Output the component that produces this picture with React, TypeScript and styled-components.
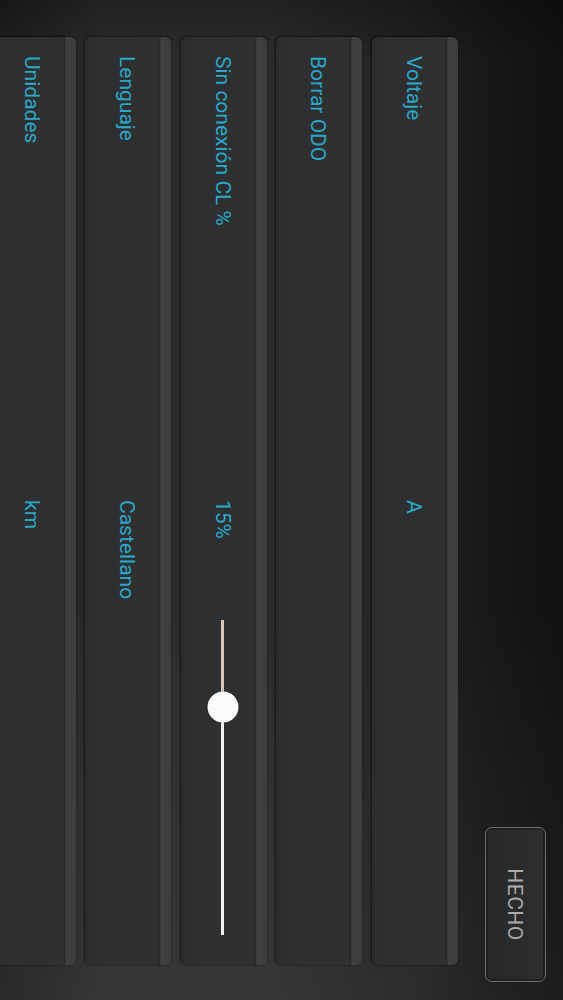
import React from "react";
import styled, { createGlobalStyle } from "styled-components";

const GlobalStyle = createGlobalStyle`
  html, body {
    margin: 0;
    padding: 0;
    background: #111213;
  }
  body {
    font-family: Roboto, "Noto Sans", "Liberation Sans", sans-serif;
  }
`;

const Viewport = styled.div`
  width: 563px;
  height: 1000px;
  overflow: hidden;
  position: relative;
`;

/* The reference is a landscape screen shown rotated a quarter turn clockwise */
const Screen = styled.div`
  width: 1000px;
  height: 563px;
  transform-origin: 0 0;
  transform: translateX(563px) rotate(90deg);
  display: flex;
  flex-direction: column;
  overflow: hidden;
  background:
    linear-gradient(to right, rgba(0, 0, 0, 0.25) 0%, rgba(0, 0, 0, 0) 6%, rgba(0, 0, 0, 0) 60%, rgba(255, 255, 255, 0.05) 100%),
    linear-gradient(
      to bottom,
      #101112 0px,
      #161718 70px,
      #202122 150px,
      #2b2c2d 300px,
      #2b2c2d 460px,
      #1d1e1f 563px
    );
`;

const Header = styled.div`
  height: 105px;
  flex-shrink: 0;
  box-sizing: border-box;
  display: flex;
  justify-content: flex-end;
  align-items: flex-start;
  padding: 17px 18px 0 0;
`;

const DoneButton = styled.button`
  width: 155px;
  height: 61px;
  box-sizing: border-box;
  border: 1.5px solid #6c6d6e;
  border-radius: 7px;
  background: linear-gradient(to bottom, #303132, #2a2b2c 40%, #272829);
  box-shadow: inset 0 0 0 2px #1f2021;
  color: #ababab;
  font-family: Roboto, "Noto Sans", sans-serif;
  font-size: 21px;
  letter-spacing: 0.5px;
  display: flex;
  align-items: center;
  justify-content: center;
  padding: 0;
`;

const List = styled.div`
  display: flex;
  flex-direction: column;
  gap: 9.5px;
  padding: 0 35px 0 37px;
`;

const Row = styled.div`
  height: 86px;
  flex-shrink: 0;
  box-sizing: border-box;
  border-radius: 6px;
  background: linear-gradient(
    to bottom,
    #3c3d3e 0px,
    #3f4041 10px,
    #28292a 11.5px,
    #2f3031 13px,
    #2e2f30 70px,
    #2b2c2d 100%
  );
  box-shadow: 0 1px 2px rgba(0, 0, 0, 0.5), -1px 0 2px rgba(0, 0, 0, 0.35);
  display: grid;
  grid-template-columns: 444px 1fr;
  align-items: center;
  padding: 2px 30px 0 19px;
`;

const Label = styled.span`
  color: #2ba8c9;
  font-size: 21px;
  white-space: nowrap;
`;

const ValueCell = styled.div`
  display: flex;
  align-items: center;
`;

const Value = styled.span<{ $width?: number }>`
  color: #2ba8c9;
  font-size: 21px;
  white-space: nowrap;
  width: ${(p) => (p.$width ? `${p.$width}px` : "auto")};
  flex-shrink: 0;
`;

const Slider = styled.div`
  position: relative;
  width: 315px;
  height: 31px;
  display: flex;
  align-items: center;
`;

const Track = styled.div`
  width: 100%;
  height: 3px;
  display: flex;
`;

const TrackPart = styled.div<{ $color: string }>`
  height: 100%;
  background: ${(p) => p.$color};
`;

const Thumb = styled.div`
  position: absolute;
  top: 50%;
  width: 31px;
  height: 31px;
  border-radius: 50%;
  background: #fbfbfb;
  transform: translate(-50%, -50%);
  box-shadow: 0 0 2px rgba(0, 0, 0, 0.4);
`;

type Item = { label: string; value?: string; slider?: number };

const items: Item[] = [
  { label: "Voltaje", value: "A" },
  { label: "Borrar ODO" },
  { label: "Sin conexión CL %", value: "15%", slider: 27.6 },
  { label: "Lenguaje", value: "Castellano" },
  { label: "Unidades", value: "km" },
];

export default function App() {
  return (
    <>
      <GlobalStyle />
      <Viewport>
        <Screen>
          <Header>
            <DoneButton>HECHO</DoneButton>
          </Header>
          <List>
            {items.map((it) => (
              <Row key={it.label}>
                <Label>{it.label}</Label>
                <ValueCell>
                  {it.value && (
                    <Value $width={it.slider !== undefined ? 120 : undefined}>{it.value}</Value>
                  )}
                  {it.slider !== undefined && (
                    <Slider>
                      <Track>
                        <TrackPart $color="#d6c6ba" style={{ width: `${it.slider}%` }} />
                        <TrackPart $color="#f2f2f2" style={{ width: `${100 - it.slider}%` }} />
                      </Track>
                      <Thumb style={{ left: `${it.slider}%` }} />
                    </Slider>
                  )}
                </ValueCell>
              </Row>
            ))}
          </List>
        </Screen>
      </Viewport>
    </>
  );
}
